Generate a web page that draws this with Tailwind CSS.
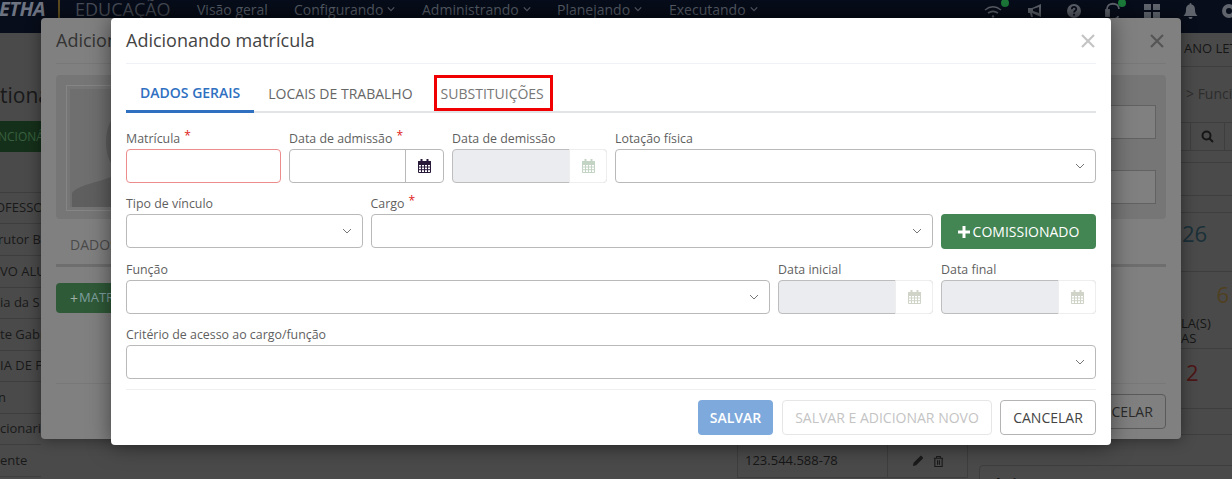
<!DOCTYPE html>
<html lang="pt-BR">

<head>
  <meta charset="UTF-8" />
  <title>Adicionando matrícula</title>
  <script src="https://cdn.jsdelivr.net/npm/@tailwindcss/browser@4"></script>
</head>

<body class="relative h-[479px] w-[1232px] overflow-hidden bg-[#4a4a4a] font-['Open_Sans',sans-serif] text-[13px] text-[#1c1c1c]">
  <!-- Top bar -->
  <header class="flex h-[33px] items-center bg-[#070d1a] pb-[15px] text-[#5a606b]">
    <span class="ml-[-1px] w-[59px] text-[20px] font-bold italic tracking-tight text-[#6d7380]">ETHA</span>
    <span class="mt-[-1px] h-[18px] w-[2px] bg-[#5a4a1d]"></span>
    <span class="ml-[15px] w-[122px] text-[18px] text-[#464b55]">EDUCAÇÃO</span>
    <nav class="flex text-[14px]">
      <span class="w-[97px]">Visão geral</span>
      <span class="flex w-[128px] items-center gap-1">Configurando <svg class="h-2 w-2" viewBox="0 0 10 10" fill="none" stroke="currentColor" stroke-width="1.5"><path d="M1 3l4 4 4-4" /></svg></span>
      <span class="flex w-[135px] items-center gap-1">Administrando <svg class="h-2 w-2" viewBox="0 0 10 10" fill="none" stroke="currentColor" stroke-width="1.5"><path d="M1 3l4 4 4-4" /></svg></span>
      <span class="flex w-[112px] items-center gap-1">Planejando <svg class="h-2 w-2" viewBox="0 0 10 10" fill="none" stroke="currentColor" stroke-width="1.5"><path d="M1 3l4 4 4-4" /></svg></span>
      <span class="flex items-center gap-1">Executando <svg class="h-2 w-2" viewBox="0 0 10 10" fill="none" stroke="currentColor" stroke-width="1.5"><path d="M1 3l4 4 4-4" /></svg></span>
    </nav>
    <!-- Status icons -->
    <div class="ml-auto mr-[-5px] mt-[3px] flex items-center gap-[23px] text-[#5f646d]">
      <span class="relative">
        <svg class="h-[16px] w-[20px]" viewBox="0 0 20 16" fill="none" stroke="currentColor" stroke-width="1.6"><path d="M2 7c5-4 11-4 16 0M5 10c3-2 7-2 10 0" /><circle cx="10" cy="13.5" r="1.2" fill="currentColor" stroke="none" /></svg>
        <span class="absolute right-[-6px] top-[-4px] h-2 w-2 rounded-full bg-[#1c7a3a]"></span>
      </span>
      <svg class="h-[16px] w-[17px]" viewBox="0 0 17 16" fill="currentColor"><path d="M15 1L6 5H2v5h2l1 4h2l-1-4 9 4zM13 4v6L7 8V6z" fill-rule="evenodd" /></svg>
      <svg class="h-[16px] w-[16px]" viewBox="0 0 16 16"><circle cx="8" cy="8" r="7" fill="currentColor" /><path d="M5.8 6.2c0-3 4.5-3 4.5-.2 0 1.700-2.300 1.700-2.300 3.400" fill="none" stroke="#070d1a" stroke-width="1.700" /><rect x="7.100" y="10.800" width="1.800" height="1.800" fill="#070d1a" /></svg>
      <span class="relative">
        <svg class="h-[18px] w-[16px]" viewBox="0 0 16 18" fill="none" stroke="currentColor" stroke-width="1.800"><path d="M2 10V7c0-7 12-7 12 0" /><rect x="1" y="8" width="3" height="6" fill="currentColor" /><path d="M13 14c0 2-2 3-5 3" /></svg>
        <span class="absolute right-[-5px] top-[-3px] h-2 w-2 rounded-full bg-[#1c7a3a]"></span>
      </span>
      <svg class="h-[14px] w-[16px]" viewBox="0 0 16 14" fill="currentColor"><rect width="7" height="6" /><rect x="9" width="7" height="6" /><rect y="8" width="7" height="6" /><rect x="9" y="8" width="7" height="6" /></svg>
      <svg class="h-[16px] w-[15px]" viewBox="0 0 15 16" fill="currentColor"><path d="M7.500 0c1 0 1 1 1 1.500 3 .7 3.500 3 3.500 5.500 0 3 1 4.500 2.500 6H.5C2 11.500 3 10 3 7c0-2.500.5-4.800 3.500-5.500C6.500 1 6.500 0 7.500 0zM5.500 14h4c0 2.500-4 2.500-4 0z" /></svg>
      <svg class="h-[16px] w-[16px]" viewBox="0 0 16 16"><circle cx="8" cy="8" r="5" fill="none" stroke="currentColor" stroke-width="4" /></svg>
    </div>
  </header>

  <!-- Page behind the dialogs, darkened by the backdrop -->
  <div class="absolute left-0 top-[33px] w-[41px] overflow-hidden whitespace-nowrap text-[13px] text-[#191919]">
    <div class="mt-[46px] h-[33px] text-[21px] leading-[33px]">tioná</div>
    <div class="mt-[9px] flex h-[31px] items-center bg-[#15301a] text-[12px] text-[#37603f]"><span class="ml-[-2px]">NCIONÁ</span></div>
    <div class="mt-[40px]">
      <div class="flex h-[31px] items-center border-t border-[#3e3e3e]"><span class="ml-[-5px]">OFESSO</span></div>
      <div class="flex h-[32px] items-center border-t border-[#3e3e3e]"><span class="ml-[-2px]">rutor B</span></div>
      <div class="flex h-[32px] items-center border-t border-[#3e3e3e]">VO ALU</div>
      <div class="flex h-[31px] items-center border-t border-[#3e3e3e]">ia da S</div>
      <div class="flex h-[32px] items-center border-t border-[#3e3e3e]">te Gabr</div>
      <div class="flex h-[31px] items-center border-t border-[#3e3e3e]">IA DE F</div>
      <div class="flex h-[32px] items-center border-t border-[#3e3e3e]"><span class="ml-[-2px]">n</span></div>
      <div class="flex h-[31px] items-center border-t border-[#3e3e3e]">cionari</div>
      <div class="flex h-[33px] items-center border-y border-[#3e3e3e]">ente</div>
    </div>
  </div>

  <!-- Table row under the dialogs -->
  <div class="absolute left-[737px] top-[445px] flex h-[33px] items-center border-b border-[#3e3e3e] text-[#161616]">
    <span class="flex h-full w-[151px] items-center border-x border-[#3e3e3e] pl-[7px]">123.544.588-78</span>
    <span class="flex h-full w-[80px] items-center gap-[9px] border-r border-[#3e3e3e] pl-[24px]">
      <svg class="h-[12px] w-[12px]" viewBox="0 0 13 13" fill="#1a1a1a"><path d="M1 12l.7-3.500L8.800 1.400c.7-.7 1.300-.5 1.800 0l1 1c.5.5.6 1.100 0 1.700L4.500 11.200z" /></svg>
      <svg class="h-[13px] w-[11px]" viewBox="0 0 12 13" fill="none" stroke="#1a1a1a" stroke-width="1.200"><path d="M1 3h10M4 3V1h4v2M2 3v9h8V3M5 5v5M7 5v5" /></svg>
    </span>
  </div>
  <div class="absolute left-[979px] top-[465px] h-[30px] w-[260px] rounded border border-[#3e3e3e] pl-[13px] pt-[6px] text-[16px] font-semibold text-[#161616]">Avisos</div>

  <!-- Right side of the page -->
  <div class="absolute left-[1181px] top-[33px] w-[51px] overflow-hidden whitespace-nowrap text-[#161616]">
    <div class="flex h-[34px] items-center border-b border-[#3e3e3e] pl-[3px] pb-[1px]">ANO LETIVO</div>
    <div class="flex h-[55px] items-center pl-[5px] pb-[2px] text-[14px] text-[#2d2d2d]">&gt; Funcionário</div>
    <div class="flex h-[29px] border-y border-[#3e3e3e]">
      <span class="ml-[9px] flex w-[35px] items-center justify-center border-x border-[#3e3e3e]">
        <svg class="h-[13px] w-[13px]" viewBox="0 0 13 13" fill="none" stroke="#161616" stroke-width="2"><circle cx="5.500" cy="5.500" r="4" /><path d="M8.500 8.500L12 12" /></svg>
      </span>
    </div>
    <div class="h-[12px] border-b border-[#3e3e3e]"></div>
    <div class="h-[33px] border-b border-[#3e3e3e]"></div>
    <div class="h-[17px] border-b border-[#3e3e3e]"></div>
    <div class="h-[59px] border-b border-[#3e3e3e] pt-[5px] text-[22px] leading-[30px] text-[#1a3038]"><span class="ml-[1px]">26</span></div>
    <div class="h-[77px] border-b border-[#3e3e3e] text-[13px] leading-[15px]">
      <div class="h-[44px] pt-[7px] text-right text-[22px] leading-[30px] text-[#4f4020]"><span class="mr-[3px]">6</span></div>
      <div>LA(S)</div>
      <div>AS</div>
    </div>
    <div class="h-[60px] border-b border-[#3e3e3e] pt-[8px] text-[22px] leading-[30px] text-[#4d1616]"><span class="ml-[5px]">2</span></div>
    <div class="h-[26px] border-b border-[#3e3e3e]"></div>
    <div class="h-[31px] border-b border-[#3e3e3e]"></div>
  </div>

  <!-- Dialog behind -->
  <div class="absolute left-[41px] top-[18px] flex h-[421px] w-[1140px] flex-col rounded-sm bg-[#808080] px-[15px] text-[#333333] shadow-[0_0_15px_rgba(0,0,0,.45)]">
    <div class="flex h-[46px] items-center justify-between border-b border-[#787878] text-[18px]">
      <span>Adicionando</span>
      <svg class="mr-[2px] h-[14px] w-[14px]" viewBox="0 0 14 14" stroke="#555555" stroke-width="2.200"><path d="M1 1l12 12M13 1L1 13" /></svg>
    </div>
    <div class="mt-[11px] flex h-[144px] justify-between rounded bg-[#767676] p-[10px]">
      <div class="h-[126px] w-[70px] border border-[#858585] p-[3px]">
        <svg class="h-[118px] w-[62px] bg-[#6f6f6f]" viewBox="0 0 62 118" fill="#5f5f5f"><path d="M2 118v-14c6-8 24-10 39-16h21v30z" /><ellipse cx="49" cy="53" rx="13" ry="27" /></svg>
      </div>
      <div class="w-[60px]">
        <div class="mt-[20px] h-[34px] border border-[#626262] bg-[#808080]"></div>
        <div class="mt-[31px] h-[34px] border border-[#626262] bg-[#808080]"></div>
      </div>
    </div>
    <div class="mt-[15px] h-[33px] border-b-[3px] border-[#6e6e6e] pl-[14px] text-[14px] text-[#4a4a4a]">DADOS</div>
    <div class="mt-[16px] flex h-[30px] w-[100px] items-center gap-[1px] rounded-sm bg-[#2f5a38] pl-[14px] text-[13px] text-[#7f9f9f]"><span class="text-[14px] text-[#a3aea6]">+</span> MATRÍCULA</div>
    <div class="mt-[70px] border-t border-[#787878]"></div>
    <div class="mt-[10px] flex justify-end">
      <span class="flex h-[35px] w-[96px] items-center justify-center rounded-sm border border-[#5a5a5a] text-[14px] text-[#2a2a2a]">CANCELAR</span>
    </div>
  </div>

  <!-- Dialog on top -->
  <div class="absolute left-[111px] top-[18px] h-[427px] w-[1000px] rounded-sm bg-white px-[15px] text-[12.4px] text-[#5f5f5f] shadow-[0_0_22px_rgba(0,0,0,.5)]">
    <div class="flex h-[46px] items-center justify-between border-b border-[#eef1f5]">
      <h4 class="text-[18px] text-[#444444]">Adicionando matrícula</h4>
      <svg class="mr-[1px] h-[14px] w-[14px]" viewBox="0 0 14 14" stroke="#c4c4c4" stroke-width="2.200"><path d="M1 1l12 12M13 1L1 13" /></svg>
    </div>

    <div class="relative mt-[11px] flex h-[38px] border-b-[2px] border-[#e3e4e8] text-[14px]">
      <span class="mb-[-2px] flex items-center border-b-[3px] border-[#2f70c1] px-[14px] font-semibold text-[#2f70c1]">DADOS GERAIS</span>
      <span class="flex items-center px-[14px] text-[#666666]">LOCAIS DE TRABALHO</span>
      <span class="flex items-center px-[14px] text-[#777777]">SUBSTITUIÇÕES</span>
      <span class="absolute left-[308px] top-0 h-[36px] w-[119px] border-[3px] border-[#f00000]"></span>
    </div>

    <div class="mt-[16px] grid grid-cols-12 gap-x-2">
      <label class="col-span-2 h-[65px]">
        <span class="flex h-[20px] items-center">Matrícula<b class="mb-[7px] ml-[4px] text-[12px] font-normal text-[#e02020]">*</b></span>
        <span class="block h-[34px] rounded-sm border border-[#ec8d8d]"></span>
      </label>
      <label class="col-span-2">
        <span class="flex h-[20px] items-center">Data de admissão<b class="mb-[7px] ml-[4px] text-[12px] font-normal text-[#e02020]">*</b></span>
        <span class="flex h-[34px] justify-end rounded-sm border border-[#b9b9b9]">
          <span class="flex w-[38px] items-center justify-center border-l border-[#b9b9b9]">
            <svg class="h-[14px] w-[13px]" viewBox="0 0 13 14" fill="none" stroke="#2a1a3a" stroke-width="1"><path d="M.5 2.500h12v11H.5zM.5 5.500h12M.5 8h12M.5 10.700h12M3.500 5.500v8M6.500 5.500v8M9.500 5.500v8" /><path d="M3.500 0v3.500M9.500 0v3.500" stroke-width="2" /><path d="M.5 2.500h12v3H.5z" fill="#2a1a3a" /></svg>
          </span>
        </span>
      </label>
      <label class="col-span-2">
        <span class="flex h-[20px] items-center">Data de demissão</span>
        <span class="flex h-[34px] justify-end rounded-sm border border-[#bdbdbd] bg-[#ebecef]">
          <span class="my-[-1px] mr-[-1px] flex w-[38px] items-center justify-center rounded-r-sm border border-[#eeeeee] bg-white">
            <svg class="h-[14px] w-[13px]" viewBox="0 0 13 14" fill="none" stroke="#c4d4c4" stroke-width="1"><path d="M.5 2.500h12v11H.5zM.5 5.500h12M.5 8h12M.5 10.700h12M3.500 5.500v8M6.500 5.500v8M9.500 5.500v8" /><path d="M3.500 0v3.500M9.500 0v3.500" stroke-width="2" /><path d="M.5 2.500h12v3H.5z" fill="#c4d4c4" /></svg>
          </span>
        </span>
      </label>
      <label class="col-span-6">
        <span class="flex h-[20px] items-center">Lotação física</span>
        <span class="flex h-[34px] items-center justify-end rounded-sm border border-[#b9b9b9] pr-[10px]">
          <svg class="h-[10px] w-[10px]" viewBox="0 0 10 10" fill="none" stroke="#777777" stroke-width="1"><path d="M1 3l4 4 4-4" /></svg>
        </span>
      </label>

      <label class="col-span-3 h-[66px]">
        <span class="flex h-[20px] items-center">Tipo de vínculo</span>
        <span class="flex h-[34px] items-center justify-end rounded-sm border border-[#b9b9b9] pr-[10px]">
          <svg class="h-[10px] w-[10px]" viewBox="0 0 10 10" fill="none" stroke="#777777" stroke-width="1"><path d="M1 3l4 4 4-4" /></svg>
        </span>
      </label>
      <label class="col-span-7">
        <span class="flex h-[20px] items-center">Cargo<b class="mb-[7px] ml-[4px] text-[12px] font-normal text-[#e02020]">*</b></span>
        <span class="flex h-[34px] items-center justify-end rounded-sm border border-[#b9b9b9] pr-[10px]">
          <svg class="h-[10px] w-[10px]" viewBox="0 0 10 10" fill="none" stroke="#777777" stroke-width="1"><path d="M1 3l4 4 4-4" /></svg>
        </span>
      </label>
      <div class="col-span-2 pt-[20px]">
        <button class="flex h-[35px] w-full items-center justify-center gap-[3px] rounded-sm bg-[#438553] text-[14px] font-medium text-white">
          <svg class="h-[12px] w-[12px]" viewBox="0 0 12 12" fill="white"><path d="M4.500 0h3v4.500H12v3H7.500V12h-3V7.500H0v-3h4.500z" /></svg>
          COMISSIONADO
        </button>
      </div>

      <label class="col-span-8 h-[65px]">
        <span class="flex h-[20px] items-center">Função</span>
        <span class="flex h-[34px] items-center justify-end rounded-sm border border-[#b9b9b9] pr-[10px]">
          <svg class="h-[10px] w-[10px]" viewBox="0 0 10 10" fill="none" stroke="#777777" stroke-width="1"><path d="M1 3l4 4 4-4" /></svg>
        </span>
      </label>
      <label class="col-span-2">
        <span class="flex h-[20px] items-center">Data inicial</span>
        <span class="flex h-[34px] justify-end rounded-sm border border-[#bdbdbd] bg-[#ebecef]">
          <span class="my-[-1px] mr-[-1px] flex w-[38px] items-center justify-center rounded-r-sm border border-[#eeeeee] bg-white">
            <svg class="h-[14px] w-[13px]" viewBox="0 0 13 14" fill="none" stroke="#cfd3c8" stroke-width="1"><path d="M.5 2.500h12v11H.5zM.5 5.500h12M.5 8h12M.5 10.700h12M3.500 5.500v8M6.500 5.500v8M9.500 5.500v8" /><path d="M3.500 0v3.500M9.500 0v3.500" stroke-width="2" /><path d="M.5 2.500h12v3H.5z" fill="#cfd3c8" /></svg>
          </span>
        </span>
      </label>
      <label class="col-span-2">
        <span class="flex h-[20px] items-center">Data final</span>
        <span class="flex h-[34px] justify-end rounded-sm border border-[#bdbdbd] bg-[#ebecef]">
          <span class="my-[-1px] mr-[-1px] flex w-[38px] items-center justify-center rounded-r-sm border border-[#eeeeee] bg-white">
            <svg class="h-[14px] w-[13px]" viewBox="0 0 13 14" fill="none" stroke="#cfd3c8" stroke-width="1"><path d="M.5 2.500h12v11H.5zM.5 5.500h12M.5 8h12M.5 10.700h12M3.500 5.500v8M6.500 5.500v8M9.500 5.500v8" /><path d="M3.500 0v3.500M9.500 0v3.500" stroke-width="2" /><path d="M.5 2.500h12v3H.5z" fill="#cfd3c8" /></svg>
          </span>
        </span>
      </label>

      <label class="col-span-12">
        <span class="flex h-[20px] items-center">Critério de acesso ao cargo/função</span>
        <span class="flex h-[34px] items-center justify-end rounded-sm border border-[#b9b9b9] pr-[10px]">
          <svg class="h-[10px] w-[10px]" viewBox="0 0 10 10" fill="none" stroke="#777777" stroke-width="1"><path d="M1 3l4 4 4-4" /></svg>
        </span>
      </label>
    </div>

    <div class="mt-[10px] flex justify-end gap-[8px] border-t border-[#f0f0f0] pt-[10px] text-[14px]">
      <button class="mr-[1px] h-[35px] w-[75px] rounded-sm bg-[#7ea9dc] font-semibold text-white">SALVAR</button>
      <button class="h-[35px] w-[210px] rounded-sm border border-[#e6e6e6] text-[#c4c4c4]">SALVAR E ADICIONAR NOVO</button>
      <button class="h-[35px] w-[96px] rounded-sm border border-[#b4b4b4] text-[#444444]">CANCELAR</button>
    </div>
  </div>
</body>

</html>
